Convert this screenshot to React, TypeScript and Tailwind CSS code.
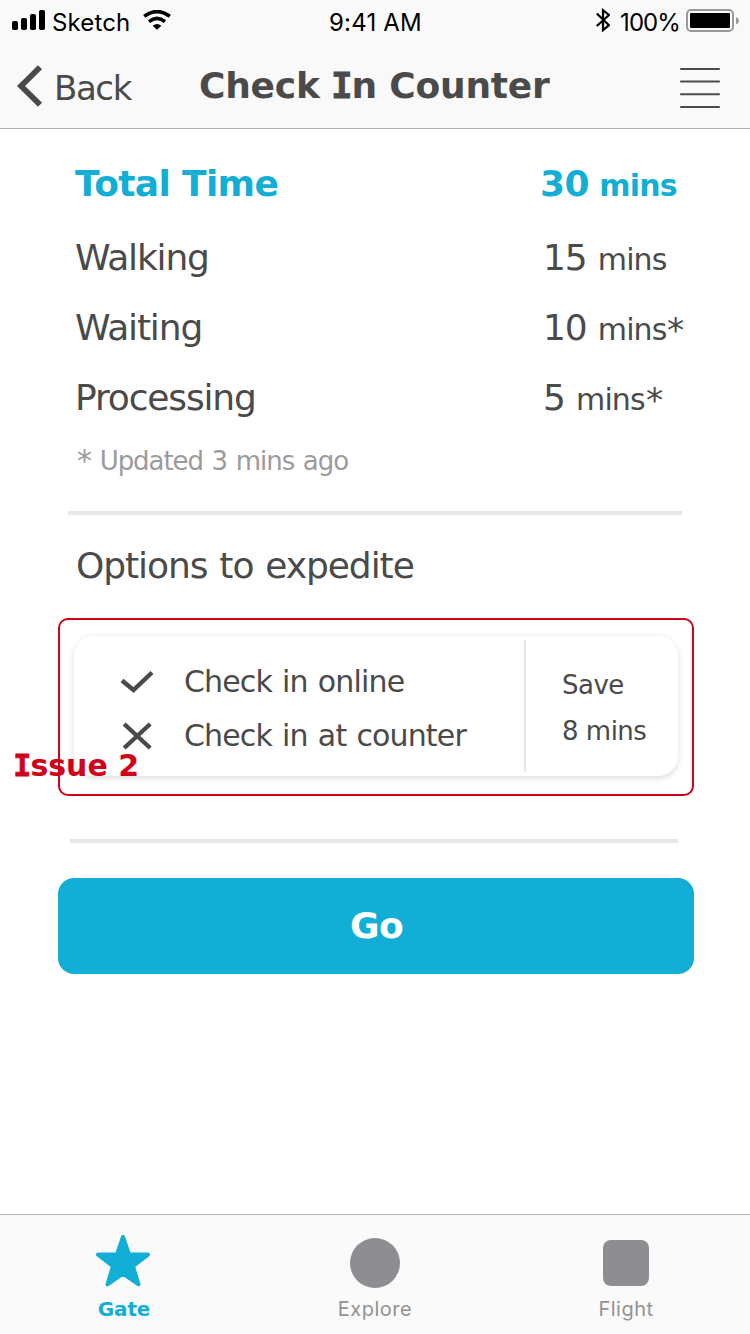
import type { ReactNode } from "react";

/* Slab capital I, as used in the bold headings */
function SlabI() {
  return (
    <span className="inline-block w-[0.546em] text-center font-['DejaVu_Sans_Mono',monospace] font-bold leading-none tracking-normal [-webkit-text-stroke:0.8px_currentColor]">
      <span className="-mx-2">I</span>
    </span>
  );
}

function Star() {
  return <span className="ml-px inline-block origin-left scale-[1.15]">*</span>;
}

function StatusBar() {
  return (
    <div className="flex h-11 items-start font-['Inter',sans-serif] text-[24px] leading-[30px] text-black">
      <div className="flex flex-1 pl-3">
        <svg width="34" height="20" viewBox="0 0 34 20" className="mt-[10px]">
          <rect x="0" y="11" width="6" height="9" rx="1.8" />
          <rect x="9" y="8" width="6" height="12" rx="1.8" />
          <rect x="18" y="4" width="6" height="16" rx="1.8" />
          <rect x="27" y="0" width="6" height="20" rx="1.8" />
        </svg>
        <span className="ml-[6px] mt-[8px] w-[78px] whitespace-nowrap tracking-[0.15px]">Sketch</span>
        <svg width="28" height="20" viewBox="0 0 28 20" className="ml-[13px] mt-[10px]" fill="none" stroke="black">
          <path d="M1.200 6.300Q14-3.200 26.800 6.300" strokeWidth="3.600" />
          <path d="M6 11.600Q14 5.200 22 11.600" strokeWidth="3.600" />
          <path d="M9.600 15.800Q14 12.200 18.400 15.800L14 19.800Z" fill="black" stroke="none" />
        </svg>
      </div>
      <span className="mt-[8px] whitespace-nowrap tracking-[0.2px]">9:41 AM</span>
      <div className="flex flex-1 justify-end pr-[11px]">
        <svg width="14" height="24" viewBox="0 0 14 24" className="mt-[8px]" fill="none" stroke="black" strokeWidth="2.200">
          <path d="M.8 5.500 13 17.200 7 22.200V2.200L13 7 .8 18" />
        </svg>
        <span className="ml-[10px] mt-[8px] w-[60px] whitespace-nowrap tracking-[-0.9px]">100%</span>
        <svg width="53" height="24" viewBox="0 0 53 24" className="ml-[6px] mt-[8px]">
          <rect x="1" y="2" width="46" height="21" rx="4" fill="none" stroke="#999" strokeWidth="2" />
          <rect x="4" y="5" width="40" height="15" rx="1" />
          <path d="M50 9q3 1.200 3 3.700t-3 3.700Z" fill="#999" />
        </svg>
      </div>
    </div>
  );
}

function NavBar() {
  return (
    <div className="flex h-[84px] items-start text-[#4a4a4a]">
      <button className="flex w-[199px] items-start pl-[17px]">
        <svg width="26" height="42" viewBox="0 0 26 42" className="mt-[21px]" fill="none" stroke="currentColor" strokeWidth="5.800">
          <path d="M23 2.200 4 21 23 39.800" />
        </svg>
        <span className="ml-[11px] mt-[24px] whitespace-nowrap text-[34px] leading-10 tracking-[-1.4px]">Back</span>
      </button>
      <h1 className="mt-[22px] w-[352px] whitespace-nowrap text-[36px] font-bold leading-10 tracking-[-0.22px]">
        Check <SlabI />n Counter
      </h1>
      <svg width="40" height="42" viewBox="0 0 40 42" className="ml-[129px] mt-[23px]" stroke="currentColor" strokeWidth="2" strokeLinecap="round">
        <path d="M1 2H39M1 14.600H39M1 27.300H39M1 40H39" />
      </svg>
    </div>
  );
}

function TimeRow({ label, value, estimated = false }: { label: string; value: string; estimated?: boolean }) {
  return (
    <div className="flex h-[70px] whitespace-nowrap leading-10 tracking-[-1.15px]">
      <span className="w-[468px] text-[36px]">{label}</span>
      <span className="text-[36px] [word-spacing:1px]">
        {value}{" "}
        <span className="text-[30px] tracking-[-0.9px]">
          mins{estimated && <Star />}
        </span>
      </span>
    </div>
  );
}

function Option({ icon, children }: { icon: ReactNode; children: ReactNode }) {
  return (
    <div className="flex h-[54px] items-center">
      <span className="flex w-[64px]">{icon}</span>
      <span className="whitespace-nowrap text-[30px] leading-[54px] tracking-[-0.85px] [word-spacing:1.4px]">{children}</span>
    </div>
  );
}

function Tab({ icon, label, active = false }: { icon: ReactNode; label: string; active?: boolean }) {
  return (
    <div className="flex w-[150px] flex-col items-center">
      <div className="flex h-[52px] items-end justify-center">{icon}</div>
      <span
        className={
          active
            ? "mt-[7px] pl-[2px] text-[20px] font-bold leading-7 tracking-[-0.1px] text-[#12aed6]"
            : "mt-[7px] font-['Inter',sans-serif] text-[20px] leading-7 tracking-[0.5px] text-[#929292]"
        }
      >
        {label}
      </span>
    </div>
  );
}

export default function App() {
  return (
    <div className="flex h-[1334px] w-[750px] flex-col overflow-hidden bg-white font-['DejaVu_Sans',sans-serif] text-[#4a4a4a]">
      <header className="h-[129px] border-b border-[#b2b2b2] bg-[#f9f9f9]">
        <StatusBar />
        <NavBar />
      </header>

      <main className="flex flex-1 flex-col">
        <section className="pl-[75px] pt-[35px]">
          <div className="flex h-[74px] whitespace-nowrap text-[36px] font-bold leading-10 tracking-[-0.65px] text-[#12aed6]">
            <span className="w-[465px]">Total Time</span>
            <span className="[word-spacing:-1.5px]">
              30 <span className="text-[30px] tracking-[-0.8px]">mins</span>
            </span>
          </div>
          <TimeRow label="Walking" value="15" />
          <TimeRow label="Waiting" value="10" estimated />
          <TimeRow label="Processing" value="5" estimated />
          <p className="-mt-[7px] pl-px text-[26px] leading-10 tracking-[-1.06px] text-[#9b9b9b] [word-spacing:1.5px]">
            <Star /> <span className="ml-[2px]">Updated 3 mins ago</span>
          </p>
        </section>

        <div className="ml-[68px] mt-[30px] h-1 w-[614px] bg-[#e8e8e8]" />
        <h2 className="ml-[76px] mt-[31px] text-[36px] leading-10 tracking-[-1.06px] [word-spacing:1.5px]">Options to expedite</h2>

        <section className="relative ml-[58px] mt-[32px] h-[178px] w-[636px] rounded-[10px] border-2 border-[#d0021b] p-[14px] pt-[16px]">
          <div className="flex h-[140px] w-[604px] rounded-[20px] bg-white shadow-[0_2px_7px_rgba(0,0,0,0.14)]">
            <div className="w-[450px] pl-[46px] pt-[19px]">
              <Option
                icon={
                  <svg width="34" height="24" viewBox="0 0 34 24" fill="none" stroke="currentColor" strokeWidth="4.400">
                    <path d="m2 10.500 11.500 9.500L32 2.500" />
                  </svg>
                }
              >
                Check in online
              </Option>
              <Option
                icon={
                  <svg width="34" height="28" viewBox="0 0 34 28" fill="none" stroke="currentColor" strokeWidth="4.400">
                    <path d="m4.200 2 26 24M30.200 2l-26 24" />
                  </svg>
                }
              >
                Check in at counter
              </Option>
            </div>
            <div className="mt-1 h-[132px] w-[2px] bg-[#e5e6e7]" />
            <div className="whitespace-nowrap pl-[36px] pt-[26px] text-[26px] leading-[46px] tracking-[-0.5px]">
              <p>Save</p>
              <p>8 mins</p>
            </div>
          </div>
          <span className="absolute -left-[46px] top-[126px] whitespace-nowrap text-[30px] font-bold leading-10 text-[#d0021b]">
            <SlabI />ssue 2
          </span>
        </section>

        <div className="ml-[70px] mt-[43px] h-1 w-[608px] bg-[#e6e8ea]" />
        <button className="ml-[58px] mt-[35px] h-24 w-[636px] rounded-[16px] bg-[#12aed6] pl-px text-[36px] font-bold leading-10 tracking-[-0.6px] text-white">
          Go
        </button>
      </main>

      <nav className="flex h-[120px] border-t border-[#b2b2b2] bg-[#fafafa] pl-12 pt-[21px]">
        <Tab
          active
          label="Gate"
          icon={
            <svg width="54" height="52" viewBox="0 0 54 52" className="mb-px" fill="#12aed6" stroke="#12aed6" strokeWidth="4" strokeLinejoin="round">
              <path d="m27 2 6.100 17.600H52L37 31.200 42.500 49.300 27 38.600 11.500 49.300 17 31.200 2 19.600H20.900Z" />
            </svg>
          }
        />
        <div className="ml-[102px]">
          <Tab label="Explore" icon={<div className="size-[50px] rounded-full bg-[#8e8d92]" />} />
        </div>
        <div className="ml-[101px]">
          <Tab label="Flight" icon={<div className="mb-[2px] size-[46px] rounded-[8px] bg-[#8e8d92]" />} />
        </div>
      </nav>
    </div>
  );
}
